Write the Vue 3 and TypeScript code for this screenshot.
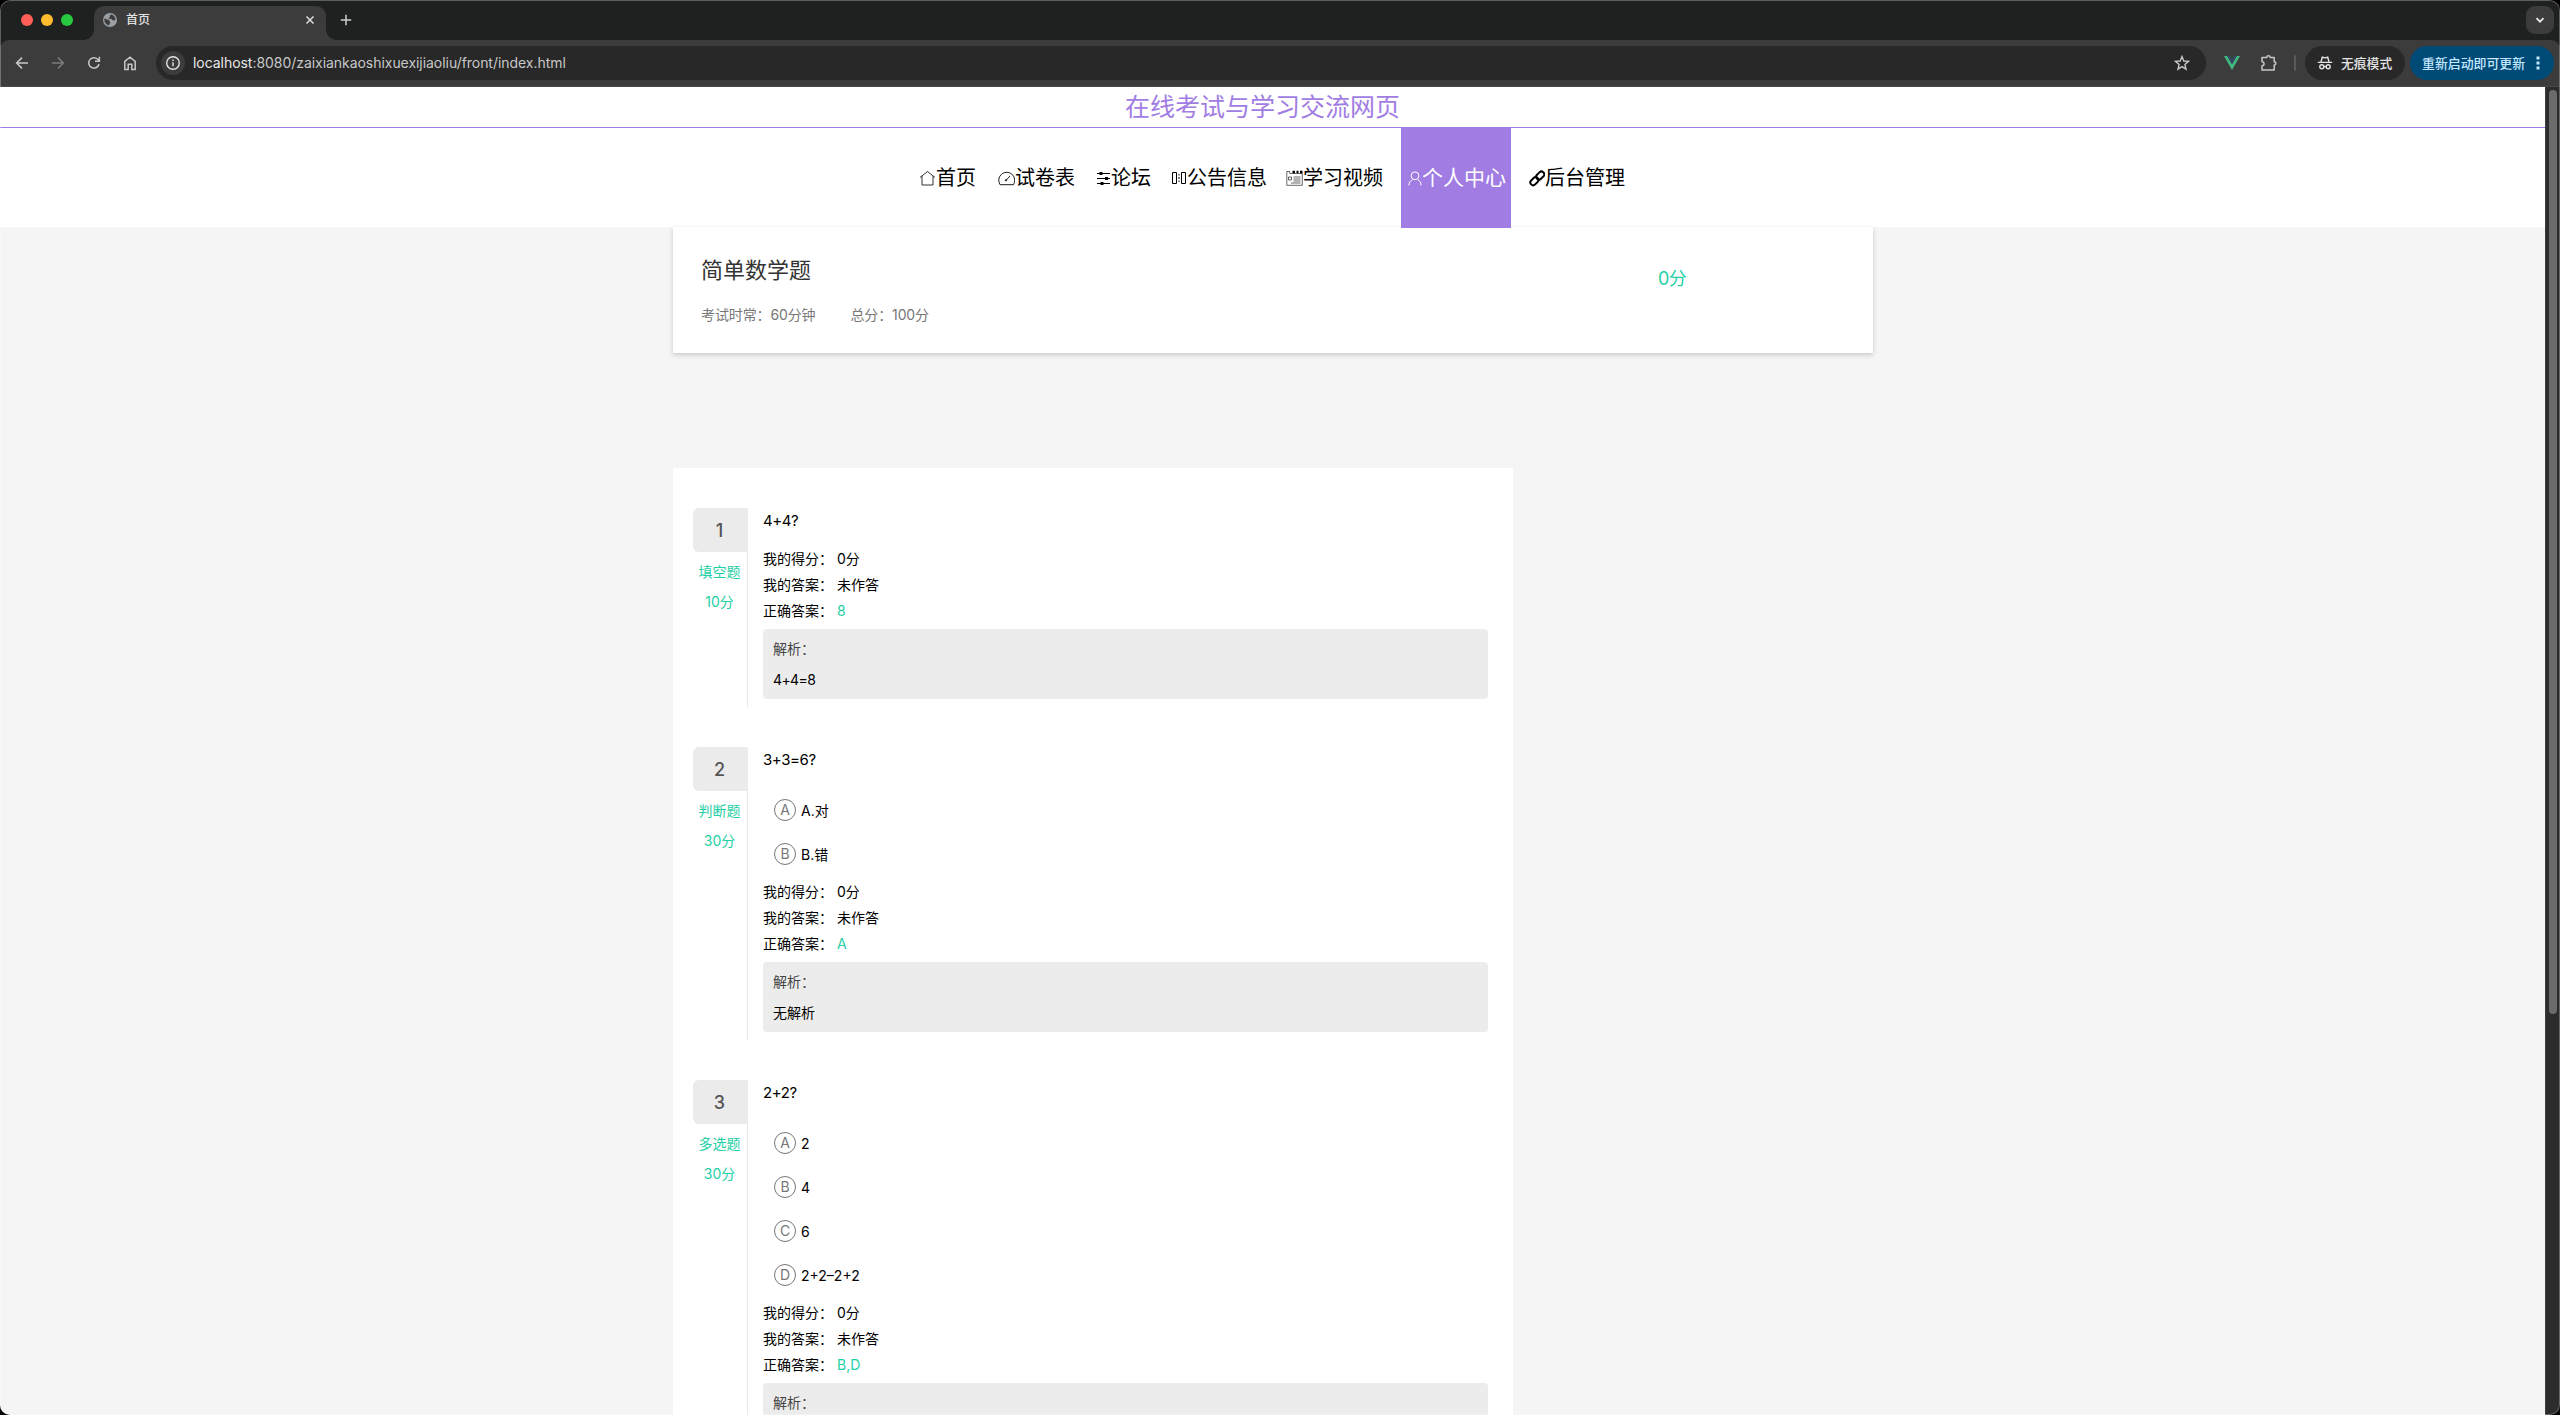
<script setup lang="ts">
interface NavItem {
  key: string
  label: string
  gap: number
  iconWidth: number
}

interface Question {
  text: string
  type: string
  points: string
  options: { key: string; text: string }[]
  score: string
  mine: string
  correct: string
  analysis: string
}

const navItems: NavItem[] = [
  { key: 'home', label: '首页', gap: 0, iconWidth: 17 },
  { key: 'gauge', label: '试卷表', gap: 22, iconWidth: 17 },
  { key: 'sliders', label: '论坛', gap: 21, iconWidth: 15 },
  { key: 'flip', label: '公告信息', gap: 20, iconWidth: 16 },
  { key: 'news', label: '学习视频', gap: 19, iconWidth: 17 },
  { key: 'user', label: '个人中心', gap: 18, iconWidth: 14 },
  { key: 'link', label: '后台管理', gap: 18, iconWidth: 16 },
]
const activeKey = 'user'

const questions: Question[] = [
  {
    text: '4+4?', type: '填空题', points: '10分', options: [],
    score: '0分', mine: '未作答', correct: '8', analysis: '4+4=8',
  },
  {
    text: '3+3=6?', type: '判断题', points: '30分',
    options: [{ key: 'A', text: 'A.对' }, { key: 'B', text: 'B.错' }],
    score: '0分', mine: '未作答', correct: 'A', analysis: '无解析',
  },
  {
    text: '2+2?', type: '多选题', points: '30分',
    options: [
      { key: 'A', text: '2' }, { key: 'B', text: '4' },
      { key: 'C', text: '6' }, { key: 'D', text: '2+2–2+2' },
    ],
    score: '0分', mine: '未作答', correct: 'B,D', analysis: '无解析',
  },
]

const isFormula = (text: string): boolean => /^[\x20-\x7e]+$/.test(text)
</script>

<template>
  <div class="window">
    <div class="tabstrip">
      <div class="lights"><i class="red"></i><i class="yellow"></i><i class="green"></i></div>
      <div class="tab">
        <svg class="favicon" viewBox="0 0 14 14" width="14" height="14">
          <circle cx="7" cy="7" r="7" fill="#9aa0a6" />
          <path d="M1.6 5.2 4 6.6c.9.2 1.6 0 2.2.6.5.6.2 1.200.8 1.700.5.3.2 1.300-.3 1.800l-1 1.700C3 11.600 1.300 9.500 1.300 7zM8.200 1.500 6.500 2.700 7 4.200 5.400 5l1 .9 2-.1 1.200 1.500 1.600.2 1.300-1C12.300 3.900 10.500 1.900 8.200 1.500z" fill="#3c3c3c" />
        </svg>
        <span class="tab-title">首页</span>
        <svg viewBox="0 0 10 10" width="10" height="10"><path d="M1.500 1.500l7 7M8.500 1.500l-7 7" stroke="#dedede" stroke-width="1.500" /></svg>
      </div>
      <svg class="plus" viewBox="0 0 12 12" width="12" height="12"><path d="M6 .8v10.400M.8 6h10.400" stroke="#d0d0d0" stroke-width="1.500" /></svg>
      <div class="tab-menu">
        <svg viewBox="0 0 10 10" width="10" height="10"><path d="M1.500 3.200 5 6.700l3.500-3.500" fill="none" stroke="#e8e8e8" stroke-width="1.800" /></svg>
      </div>
    </div>

    <div class="toolbar">
      <div class="buttons">
        <svg viewBox="0 0 16 16"><path d="M14 8H3M8 2.600 2.600 8 8 13.400" fill="none" stroke="#c7c7c7" stroke-width="1.500" /></svg>
        <svg viewBox="0 0 16 16"><path d="M2 8h11M8 2.600 13.400 8 8 13.400" fill="none" stroke="#7b7b7b" stroke-width="1.500" /></svg>
        <svg viewBox="0 0 16 16"><path d="M13 9a5.200 5.200 0 1 1-1.300-4.700L13.200 5.800M13.400 1.800v4.400H9" fill="none" stroke="#c7c7c7" stroke-width="1.500" /></svg>
        <svg viewBox="0 0 16 16"><path d="M2.800 6.300 8 2.200l5.200 4.100v8.100H9.800V9.300H6.200v5.100H2.800z" fill="none" stroke="#c7c7c7" stroke-width="1.500" /></svg>
      </div>
      <div class="address">
        <span class="info">
          <svg viewBox="0 0 16 16" width="16" height="16"><circle cx="8" cy="8" r="6.300" fill="none" stroke="#e3e3e3" stroke-width="1.400" /><path d="M8 7.300v4M8 4.500v1.500" stroke="#e3e3e3" stroke-width="1.400" /></svg>
        </span>
        <span class="url"><b>localhost</b>:8080/zaixiankaoshixuexijiaoliu/front/index.html</span>
        <svg class="star" viewBox="0 0 16 16" width="16" height="16"><path d="M8 1.600 9.800 6l4.700.4-3.600 3.100 1.100 4.700L8 11.700l-4 2.500 1.100-4.700L1.500 6.400 6.200 6z" fill="none" stroke="#c7c7c7" stroke-width="1.400" /></svg>
      </div>
      <svg class="vue" viewBox="0 0 16 14" width="16" height="14"><path d="M0 0h3.200L8 8.300 12.800 0H16L8 14z" fill="#41b883" /><path d="M3.200 0h2.900L8 3.300 9.900 0h2.900L8 8.300z" fill="#35495e" /></svg>
      <svg class="puzzle" viewBox="0 0 18 18" width="18" height="18"><path d="M2 3.500h4.800a1.700 1.700 0 0 1 3.400 0h4v4.300a1.600 1.600 0 0 1 0 3.200v5H2v-4.300a2 2 0 0 0 0-4z" fill="none" stroke="#c7c7c7" stroke-width="1.500" stroke-linejoin="round" /></svg>
      <span class="divider"></span>
      <div class="incognito">
        <svg viewBox="0 0 16 16" width="16" height="16" fill="none" stroke="#e3e3e3" stroke-width="1.400"><path d="M4 6.800 5.300 2.200l2.700.7 2.700-.7L12 6.800M.8 7.400h14.400" /><circle cx="4.800" cy="11.800" r="2" /><circle cx="11.200" cy="11.800" r="2" /><path d="M6.800 11.500h2.400" /></svg>
        <span>无痕模式</span>
      </div>
      <div class="update">
        <span>重新启动即可更新</span>
        <svg viewBox="0 0 4 16" width="4" height="16" fill="#c2e7ff"><rect x=".5" y="1.500" width="3" height="3" /><rect x=".5" y="6.500" width="3" height="3" /><rect x=".5" y="11.500" width="3" height="3" /></svg>
      </div>
    </div>

    <div class="viewport">
      <div class="page">
        <div class="site-title">在线考试与学习交流网页</div>
        <nav>
          <div
            v-for="item in navItems"
            :key="item.key"
            class="nav-item"
            :class="{ active: item.key === activeKey }"
            :style="{ marginLeft: item.gap + 'px' }"
          >
            <svg :width="item.iconWidth" height="18" :viewBox="`0 0 ${item.iconWidth} 18`" fill="none" stroke="currentColor">
              <g v-if="item.key === 'home'" stroke-width=".8"><path d="M1 8.500 8.500 2.500 16 8.500M3 7v9h11V7" /></g>
              <g v-else-if="item.key === 'gauge'" stroke-width=".9"><path d="M2 15.700C-1.500 9.500 3 3.300 8.700 3.300S19 9.500 15.500 15.700zM7.800 11.500 12 7" /><circle cx="8" cy="11.300" r=".7" /></g>
              <g v-else-if="item.key === 'sliders'" stroke-width="1.100"><path d="M1 4.500h13M1 9.500h13M1 14.500h13" /><g fill="currentColor" stroke="none"><rect x="3.500" y="3" width="3" height="3" /><rect x="9" y="8" width="3" height="3" /><rect x="4.500" y="13" width="3" height="3" /></g></g>
              <g v-else-if="item.key === 'flip'" stroke-width="1"><path d="M1.500 3.500h4v11h-4zM10.500 3.500h4v11h-4zM8 5v1.500M8 8v2M8 11.500V13" /></g>
              <g v-else-if="item.key === 'news'" stroke-width=".6"><path d="M.8 2.500h3v2h12.500v11.800H.8zM2.500 8h3v3h-3zM7.500 8h7M7.500 10h7M7.500 12h7M5 14h9.500" /><path d="M6.500 3h2.500M10.500 3h2M14 3h2.500" stroke-width="2.400" /></g>
              <g v-else-if="item.key === 'user'" stroke-width="1"><circle cx="7" cy="6.800" r="3.900" /><path d="M1 16.500c0-3.200 1.300-4.600 3.300-5.600M9.600 10.600c2.200 1 3.400 2.700 3.400 5.900" /></g>
              <g v-else stroke-width="2"><rect x="-2.800" y="-4.800" width="5.600" height="9" rx="2.800" transform="translate(11 6.800) rotate(45)" /><rect x="-2.800" y="-4.200" width="5.600" height="9" rx="2.800" transform="translate(5.600 12) rotate(45)" /></g>
            </svg>
            <span>{{ item.label }}</span>
          </div>
        </nav>

        <div class="container">
          <section class="summary">
            <div class="exam">
              <h1>简单数学题</h1>
              <div class="meta"><span>考试时常：60分钟</span><span>总分：100分</span></div>
            </div>
            <div class="total">0分</div>
          </section>

          <section class="questions">
            <article v-for="(q, i) in questions" :key="i" class="question">
              <aside>
                <div class="number">{{ i + 1 }}</div>
                <div class="tag">{{ q.type }}</div>
                <div class="tag">{{ q.points }}</div>
              </aside>
              <div class="body">
                <div class="stem">{{ q.text }}</div>
                <ul v-if="q.options.length">
                  <li v-for="o in q.options" :key="o.key"><i>{{ o.key }}</i><span>{{ o.text }}</span></li>
                </ul>
                <div class="row"><span>我的得分：</span>{{ q.score }}</div>
                <div class="row"><span>我的答案：</span>{{ q.mine }}</div>
                <div class="row"><span>正确答案：</span><em>{{ q.correct }}</em></div>
                <div class="analysis">
                  <div class="label">解析：</div>
                  <div :class="{ formula: isFormula(q.analysis) }">{{ q.analysis }}</div>
                </div>
              </div>
            </article>
          </section>
        </div>
      </div>
      <div class="scrollbar"><div class="thumb"></div></div>
    </div>
    <div class="frame"></div>
  </div>
</template>

<style>
html, body { margin: 0; background: #000; overflow: hidden; }
</style>

<style scoped>
* { box-sizing: border-box; }
svg { display: block; flex: none; }
.window {
  position: relative;
  display: flex;
  flex-direction: column;
  width: 2560px;
  height: 1415px;
  overflow: hidden;
  border-radius: 10px;
  background: #1f2120;
  font-family: Inter, "Noto Sans CJK SC", sans-serif;
  white-space: nowrap;
}
.frame {
  position: absolute;
  inset: 0;
  border-radius: 10px;
  box-shadow: inset 0 0 0 1px rgba(255, 255, 255, .28);
}
.tabstrip { display: flex; height: 40px; flex: none; align-items: center; padding: 0 6px 0 21px; }
.lights { display: flex; gap: 8px; width: 73px; }
.lights i { width: 12px; height: 12px; border-radius: 50%; }
.red { background: #ff5f57; }
.yellow { background: #febc2e; }
.green { background: #28c840; }
.tab {
  position: relative;
  display: flex;
  align-items: center;
  width: 232px;
  height: 34px;
  margin-top: 6px;
  padding: 0 11px 6px 9px;
  border-radius: 10px 10px 0 0;
  background: #3c3c3c;
}
.tab::before, .tab::after {
  content: "";
  position: absolute;
  bottom: 0;
  width: 10px;
  height: 10px;
}
.tab::before { left: -10px; background: radial-gradient(circle at 0 0, transparent 9.500px, #3c3c3c 10px); }
.tab::after { right: -10px; background: radial-gradient(circle at 100% 0, transparent 9.500px, #3c3c3c 10px); }
.tab-title { flex: 1; margin-left: 9px; font-size: 12px; line-height: 16px; font-weight: 500; color: #e3e3e3; }
.plus { margin-left: 14px; }
.tab-menu {
  display: flex;
  align-items: center;
  justify-content: center;
  width: 28px;
  height: 28px;
  margin-left: auto;
  border-radius: 9px;
  background: #3c3c3c;
}
.toolbar {
  display: flex;
  flex: none;
  align-items: center;
  height: 47px;
  padding: 0 6px 1px 14px;
  border-bottom: 1px solid #484848;
  border-radius: 9px 9px 0 0;
  background: #3c3c3c;
}
.toolbar > * { flex: none; }
.buttons { display: flex; gap: 20px; width: 142px; margin-top: 1px; }
.buttons svg { width: 16px; height: 16px; }
.address {
  display: flex;
  align-items: center;
  width: 2050px;
  height: 34px;
  padding: 0 16px 0 5px;
  border-radius: 17px;
  background: #282828;
}
.info {
  display: flex;
  align-items: center;
  justify-content: center;
  width: 24px;
  height: 24px;
  border-radius: 50%;
  background: #3c3c3c;
}
.url { flex: 1; margin-left: 8px; font-size: 14px; line-height: 20px; color: #c7c7c7; letter-spacing: -.045px; }
.url b { font-weight: 400; color: #e8e8e8; }
.vue { margin-left: 18px; }
.puzzle { margin-left: 20px; }
.divider { width: 2px; height: 16px; margin-left: 16px; border-radius: 1px; background: #5a5a5a; }
.incognito {
  display: flex;
  align-items: center;
  width: 100px;
  height: 34px;
  margin-left: 9px;
  padding-left: 12px;
  border-radius: 17px;
  background: #282828;
  color: #e3e3e3;
  font-size: 12.800px;
  font-weight: 500;
}
.incognito span { margin-left: 8px; }
.update {
  display: flex;
  align-items: center;
  justify-content: space-between;
  width: 144px;
  height: 34px;
  margin-left: 5px;
  padding: 0 14px 0 12px;
  border-radius: 17px;
  background: #004a77;
  color: #c2e7ff;
  font-size: 12.900px;
  font-weight: 500;
}
.viewport { display: flex; flex: 1; min-height: 0; }
.page { width: 2545px; overflow: hidden; background: #f5f5f5; }
.scrollbar { width: 15px; padding: 3px 3px 0 3px; border-left: 1px solid #3e3e3e; background: #2c2c2c; }
.thumb { width: 8px; height: 924px; border-radius: 4px; background: #6b6b6b; }
.site-title {
  height: 41px;
  padding-right: 20px;
  border-bottom: 1px solid #a17de3;
  background: #fff;
  color: #a17de3;
  font-size: 25px;
  line-height: 40px;
  text-align: center;
}
nav { display: flex; height: 99px; padding-left: 919px; background: #fff; }
.nav-item {
  display: flex;
  align-items: center;
  height: 100px;
  font-size: 20px;
  line-height: 30px;
  color: #000;
}
.nav-item.active {
  position: relative;
  z-index: 1;
  width: 110px;
  padding-left: 7px;
  background: #a17de3;
  color: #fff;
  font-size: 21px;
}
.container { width: 1200px; margin-left: 673px; }
.summary {
  display: flex;
  height: 126px;
  background: #fff;
  box-shadow: 0 2px 5px rgba(0, 0, 0, .18);
}
.exam { width: 985px; padding: 28px 0 0 28px; }
h1 { margin: 0; font-size: 22px; line-height: 30px; font-weight: 400; color: #333; }
.meta { display: flex; gap: 35px; margin-top: 20px; font-size: 14px; line-height: 20px; letter-spacing: -.12px; color: #777; }
.total { padding-top: 37px; font-size: 18px; line-height: 30px; letter-spacing: -.5px; color: #1fcfa5; }
.questions { width: 840px; margin-top: 115px; padding: 40px 20px; background: #fff; }
.question { display: flex; margin-bottom: 40px; font-size: 14px; color: #000; }
aside { width: 55px; border-right: 1px solid #e8e8e8; text-align: center; color: #1fcfa5; }
.number {
  width: 55px;
  height: 44px;
  margin-bottom: 5px;
  padding-right: 2px;
  border-radius: 6px 0 0 6px;
  background: #ebebeb;
  color: #555;
  font-size: 18px;
  font-weight: 500;
  line-height: 45px;
}
.tag { padding-right: 1px; line-height: 30px; }
.body { width: 725px; margin-left: 15px; padding-bottom: 8px; }
.stem { height: 38px; font-size: 15px; line-height: 26px; letter-spacing: -.4px; }
ul { margin: 0; padding: 3px 0 3px 11px; list-style: none; }
li { display: flex; align-items: center; height: 44px; }
li i {
  width: 22px;
  height: 22px;
  margin-right: 5px;
  border: 1px solid #777;
  border-radius: 50%;
  color: #777;
  font-style: normal;
  line-height: 20px;
  text-align: center;
}
.row { line-height: 26px; }
.row span { display: inline-block; width: 74px; }
.row em { font-style: normal; color: #1fcfa5; }
.analysis { height: 70px; margin-top: 5px; padding: 4px 10px; border-radius: 4px; background: #ececec; line-height: 31px; }
.label { color: #444; }
.formula { letter-spacing: -.6px; }
</style>
